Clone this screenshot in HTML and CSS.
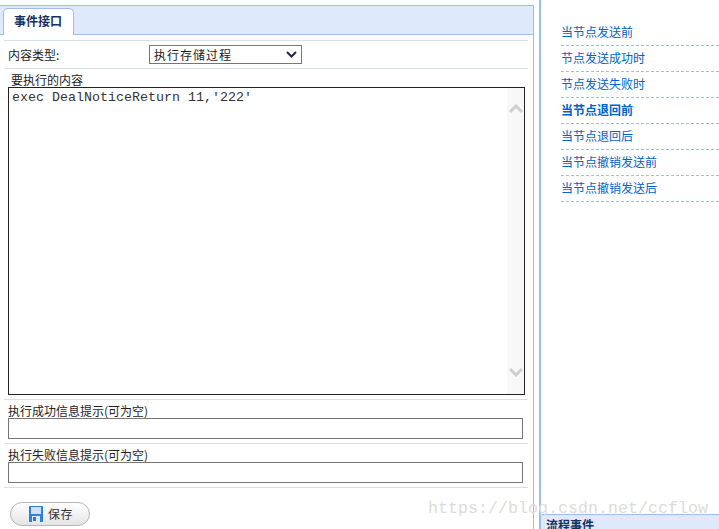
FILE: index.html
```html
<!DOCTYPE html>
<html lang="zh-CN">
<head>
<meta charset="utf-8">
<title>事件接口</title>
<link rel="stylesheet" href="styles.css">
</head>
<body>
<div class="page">
  <main class="main">
    <div class="tabs"><div class="tab">事件接口</div></div>
    <div class="form">
      <div class="row type-row">
        <span class="type-label">内容类型:</span>
        <div class="select">
          <span>执行存储过程</span>
          <svg class="select-arrow" width="11" height="7" viewBox="0 0 11 7"><path d="M1 1 5.5 5.5 10 1" fill="none" stroke="#1d2a44" stroke-width="2"/></svg>
        </div>
      </div>
      <div class="label code-label">要执行的内容</div>
      <div class="code-box">
        <textarea class="code" readonly spellcheck="false">exec DealNoticeReturn 11,'222'</textarea>
        <div class="scrollbar">
          <svg width="14" height="9" viewBox="0 0 14 9"><path d="M1 8 7 2 13 8" fill="none" stroke="#cfcfcf" stroke-width="3"/></svg>
          <svg width="14" height="9" viewBox="0 0 14 9"><path d="M1 1 7 7 13 1" fill="none" stroke="#cfcfcf" stroke-width="3"/></svg>
        </div>
      </div>
      <div class="field first-field">
        <div class="label">执行成功信息提示(可为空)</div>
        <input class="input" type="text">
      </div>
      <div class="field">
        <div class="label">执行失败信息提示(可为空)</div>
        <input class="input" type="text">
      </div>
      <div class="actions">
        <button class="save" type="button">
          <svg width="14" height="16" viewBox="0 0 14 16">
            <rect width="14" height="16" fill="#2f7fe0"/>
            <rect x="2" y="1" width="10" height="7" fill="#cfe2fa"/>
            <rect x="3" y="10" width="8" height="6" fill="#e4e8ee"/>
            <rect x="4" y="11" width="3" height="4" fill="#4a6fa8"/>
          </svg>
          <span>保存</span>
        </button>
      </div>
    </div>
  </main>
  <aside class="side">
    <ul class="links">
      <li>当节点发送前</li>
      <li>节点发送成功时</li>
      <li>节点发送失败时</li>
      <li class="active">当节点退回前</li>
      <li>当节点退回后</li>
      <li>当节点撤销发送前</li>
      <li>当节点撤销发送后</li>
    </ul>
    <div class="side-head">流程事件</div>
  </aside>
</div>
<div class="watermark">https://blog.csdn.net/ccflow</div>
</body>
</html>
```

FILE: styles.css
```css
* { box-sizing: border-box; }
html, body { margin: 0; height: 529px; overflow: hidden; background: #fff; }
body {
  position: relative;
  font: 12px/14px "Noto Sans CJK SC", "Liberation Sans", sans-serif;
  color: #222;
}
.page { display: flex; height: 529px; align-items: stretch; }

.main {
  width: 534px;
  margin-top: 5px;
  border-top: 1px solid #9dbde9;
  border-right: 1px solid #9dbde9;
  flex: none;
}
.tabs {
  height: 29px;
  padding: 2px 0 0 3px;
  background: #deeafc;
  border-bottom: 1px solid #9dbde9;
}
.tab {
  width: 71px;
  height: 27px;
  background: #fff;
  border: 1px solid #9dbde9;
  border-bottom: 0;
  border-radius: 5px 5px 0 0;
  padding: 5px 0 0 10px;
  font-size: 12px;
  font-weight: 700;
  color: #15315f;
}
.form { padding: 5px 5px 0 4px; }
.type-row {
  display: flex;
  align-items: center;
  height: 29px;
  border-top: 1px solid #d8e0ec;
  border-bottom: 1px solid #d8e0ec;
  padding-left: 4px;
}
.type-label { width: 141px; flex: none; }
.select {
  width: 153px;
  height: 19px;
  border: 1px solid #767676;
  display: flex;
  align-items: center;
  justify-content: space-between;
  padding: 0 4px 0 4px;
  letter-spacing: 1px;
}
.select-arrow { flex: none; }
.label { height: 14px; }
.code-label { margin: 4px 0 0 7px; }
.code-box {
  display: flex;
  width: 517px;
  height: 308px;
  margin-left: 4px;
  border: 1px solid #222;
}
.code {
  flex: 1;
  display: block;
  border: 0;
  outline: 0;
  resize: none;
  overflow: hidden;
  padding: 2px 3px;
  font: 13.33px/15px "Liberation Mono", monospace;
  color: #333;
}
.scrollbar {
  width: 17px;
  background: #f8f8f8;
  display: flex;
  flex-direction: column;
  justify-content: space-between;
  align-items: center;
  padding: 16px 0 17px;
}
.field {
  height: 44px;
  border-top: 1px solid #dcdfe8;
  padding: 4px 0 0 4px;
}
.first-field { margin-top: 4px; }
.input {
  display: block;
  width: 515px;
  height: 21px;
  border: 1px solid #767676;
  background: #fff;
  padding: 0;
  margin: 0;
  outline: 0;
}
.actions { border-top: 1px solid #dcdfe8; padding: 14px 0 0 6px; }
.save {
  display: flex;
  align-items: center;
  gap: 5px;
  width: 80px;
  height: 24px;
  padding: 0 0 0 18px;
  border: 1px solid #b5b5b5;
  border-radius: 12px;
  background: linear-gradient(#fff, #e4e4e4);
  font: 12px/14px "Noto Sans CJK SC", sans-serif;
  color: #333;
  letter-spacing: 0.5px;
}

.side {
  flex: 1;
  margin-left: 5px;
  border-left: 2px solid #9dbde9;
  display: flex;
  flex-direction: column;
  justify-content: space-between;
  min-width: 0;
}
.links { list-style: none; margin: 0; padding: 20px 0 0 20px; }
.links li {
  height: 26px;
  padding: 5px 0 0 0;
  border-bottom: 1px dashed #a3bcdc;
  color: #0062cc;
}
.links .active { font-weight: 700; }
.side-head {
  height: 15px;
  background: #deeafc;
  border-top: 1px solid #9dbde9;
  padding: 3px 0 0 5px;
  font-weight: 700;
  color: #15315f;
  overflow: hidden;
}
.watermark {
  position: absolute;
  left: 428px;
  top: 499px;
  font: 16.67px/20px "Liberation Mono", monospace;
  color: #dcdcd6;
  white-space: nowrap;
  pointer-events: none;
}
```
